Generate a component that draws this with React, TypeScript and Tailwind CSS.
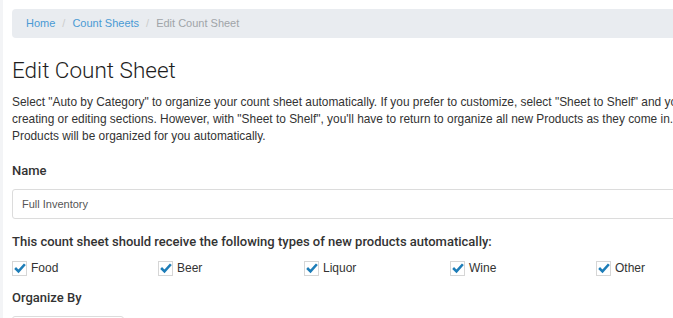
import React from "react";

const font = { fontFamily: '"Liberation Sans", Arial, sans-serif' };
const labelFont = { fontFamily: 'Roboto, "Liberation Sans", sans-serif' };

const types = ["Food", "Beer", "Liquor", "Wine", "Other"];

function Check() {
  return (
    <span className="flex h-[15px] w-[15px] shrink-0 items-center justify-center border border-[#d6d6d6] bg-white">
      <svg viewBox="0 0 16 16" className="h-[12px] w-[12px]">
        <path
          d="M1.5 8 L6 12.5 L14.5 3"
          fill="none"
          stroke="#1d7db8"
          strokeWidth="3.4"
          strokeLinecap="butt"
          strokeLinejoin="miter"
        />
      </svg>
    </span>
  );
}

export default function App() {
  return (
    <div className="flex h-[318px] w-[673px] overflow-hidden bg-[#f3f4f6]" style={font}>
      <div className="ml-[3px] w-[900px] shrink-0 bg-white pl-[9px] pt-[9px] text-[#333]">
        {/* Breadcrumb */}
        <div className="flex h-[29px] items-center gap-[7px] rounded-[4px] bg-[#e9ecf0] pl-[14px] text-[11px]">
          <span className="text-[#4a9ad4]">Home</span>
          <span className="text-[#ccc]">/</span>
          <span className="text-[#4a9ad4]">Count Sheets</span>
          <span className="text-[#ccc]">/</span>
          <span className="text-[#a0a4a8]">Edit Count Sheet</span>
        </div>

        <h1
          className="mt-[17px] text-[22.5px] font-light leading-[30px] text-[#1e1e1e]"
          style={{ fontFamily: 'Roboto, "Open Sans", sans-serif' }}
        >
          Edit Count Sheet
        </h1>

        <p className="mt-[9px] whitespace-nowrap text-[11.9px] leading-[17px]">
          Select "Auto by Category" to organize your count sheet automatically. If you prefer to customize, select "Sheet to Shelf" and you can organize by
          <br />
          creating or editing sections. However, with "Sheet to Shelf", you'll have to return to organize all new Products as they come in. With "Auto by Category", new
          <br />
          Products will be organized for you automatically.
        </p>

        <div className="mt-[17px] text-[13px] font-medium leading-[18px] text-[#333]" style={labelFont}>
          Name
        </div>
        <div className="mt-[9px] flex h-[30px] items-center rounded-[3px] border border-[#dcdcdc] pl-[9px] text-[11px] text-[#555]">
          Full Inventory
        </div>

        <div className="mt-[14px] text-[13px] font-medium leading-[18px]" style={labelFont}>
          This count sheet should receive the following types of new products automatically:
        </div>

        <div className="mt-[9px] grid grid-cols-[repeat(5,146px)] text-[12px] leading-[16px]">
          {types.map((t) => (
            <label key={t} className="flex items-center gap-[4px]">
              <Check />
              <span>{t}</span>
            </label>
          ))}
        </div>

        <div className="mt-[13px] text-[13px] font-medium leading-[18px]" style={labelFont}>
          Organize By
        </div>
        <div className="mt-[9px] h-[30px] w-[112px] rounded-[3px] border border-[#dcdcdc]" />
      </div>
    </div>
  );
}
